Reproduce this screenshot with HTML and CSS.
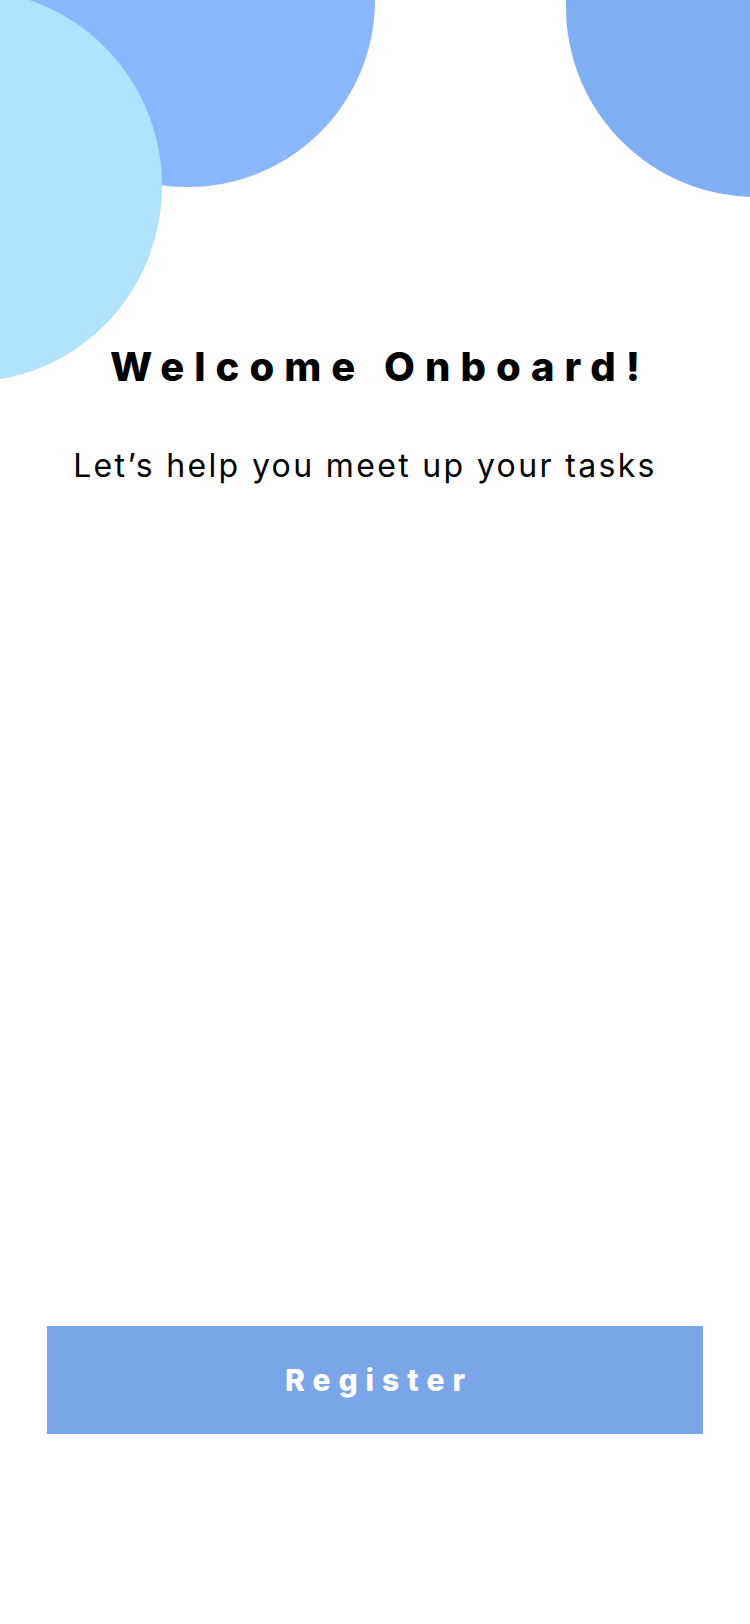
FILE: index.html
```html
<!DOCTYPE html>
<html lang="en">
<head>
<meta charset="utf-8">
<title>Welcome Onboard</title>
<link rel="stylesheet" href="styles.css">
</head>
<body>
<div class="screen">
  <div class="blob blob-dark"></div>
  <div class="blob blob-light"></div>
  <div class="blob blob-right"></div>
  <h1 class="title">Welcome Onboard!</h1>
  <p class="subtitle">Let’s help you meet up your tasks</p>
  <button class="register" type="button">Register</button>
</div>
</body>
</html>
```
FILE: styles.css
```css
html, body {
  margin: 0;
  padding: 0;
  background: #ffffff;
}

.screen {
  position: relative;
  width: 750px;
  height: 1624px;
  overflow: hidden;
  display: flex;
  flex-direction: column;
  align-items: center;
  font-family: Inter, "Open Sans", sans-serif;
  color: #000000;
}

.blob {
  position: absolute;
  border-radius: 50%;
}

.blob-dark {
  left: 1px;
  top: -187px;
  width: 374px;
  height: 374px;
  background: #8ab7fc;
}

.blob-light {
  left: -226px;
  top: -10px;
  width: 388px;
  height: 392px;
  background: #b1e2fe;
}

.blob-right {
  left: 566px;
  top: -183px;
  width: 380px;
  height: 380px;
  background: #7faef3;
}

.title {
  position: relative;
  margin: 342px 0 0 10px;
  font-size: 40px;
  line-height: 50px;
  font-weight: 800;
  letter-spacing: 10px;
}

.subtitle {
  position: relative;
  margin: 54px 20px 0 0;
  font-size: 32px;
  line-height: 40px;
  font-weight: 400;
  letter-spacing: 2.35px;
}

.register {
  margin: auto 0 190px 0;
  width: 656px;
  height: 108px;
  border: none;
  border-radius: 0;
  background: #7aa5e8;
  color: #ffffff;
  font-family: Inter, "Open Sans", sans-serif;
  font-size: 30px;
  font-weight: 800;
  letter-spacing: 8px;
  padding: 0 0 0 8px;
}
```
